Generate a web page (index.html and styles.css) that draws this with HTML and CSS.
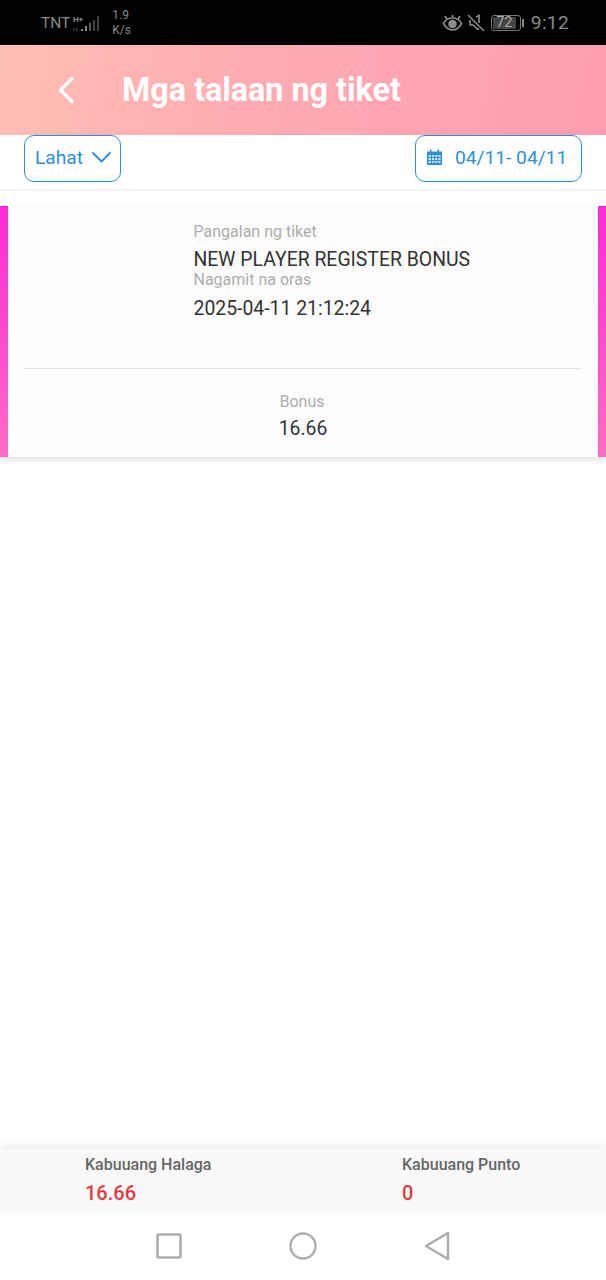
FILE: index.html
```html
<!DOCTYPE html>
<html lang="tl">
<head>
<meta charset="utf-8">
<title>Mga talaan ng tiket</title>
<link rel="stylesheet" href="styles.css">
</head>
<body>
<div class="screen">
  <div class="status">
    <div class="status-left">
      <span class="carrier">TNT</span>
      <svg class="signal" width="30" height="20" viewBox="0 0 30 20">
        <text x="1" y="9" class="hplus">H+</text>
        <g transform="translate(0 2)">
          <g fill="#3a3a3a"><rect x="1" y="13" width="1.500" height="3"/><rect x="4" y="13" width="1.500" height="3"/></g>
          <rect x="9" y="14" width="2" height="2" fill="#8a8a8a"/>
          <rect x="13" y="11" width="2" height="5" fill="#8a8a8a"/>
          <rect x="17" y="8" width="2" height="8" fill="#555"/>
          <rect x="21" y="5" width="2" height="11" fill="#3e3e3e"/>
          <rect x="25" y="1" width="2" height="15" fill="#3e3e3e"/>
        </g>
      </svg>
      <span class="speed">1.9<br>K/s</span>
    </div>
    <div class="status-right">
      <svg class="icon-eye" width="21" height="18" viewBox="0 0 21 18" fill="none" stroke="#8c8c8c" stroke-width="1.600">
        <path d="M1.500 9.500C4 5 7 4 10.500 4S17 5 19.500 9.500C17 14 14 16 10.500 16S4 14 1.500 9.500Z"/>
        <circle cx="10.500" cy="10" r="3.500" fill="#8c8c8c"/>
        <path d="M3 2l2 3M18 2l-2 3M10.500 1v2"/>
      </svg>
      <svg class="icon-mute" width="18" height="18" viewBox="0 0 18 18" fill="none" stroke="#8c8c8c" stroke-width="1.600">
        <path d="M1 1l16 16"/>
        <path d="M9 3.500L12 1v8M3 6v5h3l5 4.500 1-1" stroke-linejoin="round"/>
      </svg>
      <div class="battery"><span class="battery-level">72</span></div>
      <span class="battery-tip"></span>
      <span class="clock">9:12</span>
    </div>
  </div>

  <header class="topbar">
    <svg class="back" width="18" height="28" viewBox="0 0 18 28" fill="none" stroke="#fff" stroke-width="3.200" stroke-linecap="round" stroke-linejoin="round">
      <path d="M15 2.500L3.500 14 15 25.500"/>
    </svg>
    <h1 class="title">Mga talaan ng tiket</h1>
  </header>

  <div class="filters">
    <button class="pill pill-type">
      <span>Lahat</span>
      <svg width="19" height="11" viewBox="0 0 19 11" fill="none" stroke="#2f8fd6" stroke-width="1.800" stroke-linecap="round" stroke-linejoin="round"><path d="M1 1l8.500 8.500L18 1"/></svg>
    </button>
    <button class="pill pill-date">
      <svg width="15" height="16" viewBox="0 0 15 16">
        <path fill="#2f8fd6" d="M0 2.500h3V0.500h1.500v2h6V0.500H12v2h3V16H0Z"/>
        <g fill="#cfe5f6">
          <rect x="1.500" y="6" width="2.500" height="2"/><rect x="5" y="6" width="2.200" height="2"/><rect x="8.200" y="6" width="2.200" height="2"/><rect x="11.400" y="6" width="2.200" height="2"/>
          <rect x="1.500" y="9" width="2.500" height="2"/><rect x="5" y="9" width="2.200" height="2"/><rect x="8.200" y="9" width="2.200" height="2"/><rect x="11.400" y="9" width="2.200" height="2"/>
          <rect x="1.500" y="12" width="2.500" height="2"/><rect x="5" y="12" width="2.200" height="2"/><rect x="8.200" y="12" width="2.200" height="2"/><rect x="11.400" y="12" width="2.200" height="2"/>
        </g>
      </svg>
      <span>04/11- 04/11</span>
    </button>
  </div>

  <main class="list">
    <article class="ticket">
      <div class="ticket-top">
        <div class="ticket-info">
          <div class="label label-first">Pangalan ng tiket</div>
          <div class="value">NEW PLAYER REGISTER BONUS</div>
          <div class="label">Nagamit na oras</div>
          <div class="value value-date">2025-04-11 21:12:24</div>
        </div>
      </div>
      <div class="ticket-bottom">
        <div class="label">Bonus</div>
        <div class="value">16.66</div>
      </div>
    </article>
  </main>

  <div class="totals">
    <div class="total total-amount">
      <div class="total-label">Kabuuang Halaga</div>
      <div class="total-value">16.66</div>
    </div>
    <div class="total total-points">
      <div class="total-label">Kabuuang Punto</div>
      <div class="total-value">0</div>
    </div>
  </div>

  <nav class="navbar">
    <svg width="26" height="26" viewBox="0 0 26 26" fill="none" stroke="#aeaeae" stroke-width="2.600"><rect x="1.500" y="1.500" width="23" height="23" rx="1.500"/></svg>
    <svg width="28" height="28" viewBox="0 0 28 28" fill="none" stroke="#aeaeae" stroke-width="2.400"><circle cx="14" cy="14" r="12.500"/></svg>
    <svg width="26" height="30" viewBox="0 0 26 30" fill="none" stroke="#aeaeae" stroke-width="2.600" stroke-linejoin="round"><path d="M24 2v26L2 15Z"/></svg>
  </nav>
</div>
</body>
</html>
```
FILE: styles.css
```css
* { box-sizing: border-box; }
html, body { margin: 0; padding: 0; }
body { background: #fff; font-family: Roboto, "Liberation Sans", sans-serif; }

.screen {
  width: 606px;
  height: 1280px;
  display: flex;
  flex-direction: column;
  overflow: hidden;
}

/* Status bar */
.status {
  height: 45px;
  flex: none;
  background: #000;
  color: #8a8a8a;
  display: flex;
  align-items: center;
  justify-content: space-between;
  padding: 0 37px 0 41px;
}
.status-left, .status-right { display: flex; align-items: center; }
.carrier { font-size: 15.500px; }
.signal { margin-left: 2px; }
.hplus { font-size: 8px; font-weight: 700; fill: #8a8a8a; }
.speed { font-size: 12px; line-height: 15px; margin-left: 10px; padding-top: 1px; }
.icon-eye { margin-right: 4px; }
.icon-mute { margin-right: 6px; }
.battery {
  width: 30px;
  height: 16px;
  border: 1px solid #777;
  border-radius: 3px;
  padding: 1px;
  display: flex;
}
.battery-level {
  background: #444;
  border-radius: 1px;
  color: #aaa;
  font-size: 14.500px;
  line-height: 12px;
  text-align: center;
  flex: 1;
  margin-right: 3px;
}
.battery-tip { width: 2px; height: 8px; background: #888; margin-left: 1px; }
.clock { font-size: 19.200px; margin-left: 7px; letter-spacing: 0.3px; }

/* Header */
.topbar {
  height: 90px;
  flex: none;
  background: linear-gradient(100deg, #ffc0b4 0%, #ffb0b2 30%, #ffa5b2 65%, #ff9db0 100%);
  display: flex;
  align-items: center;
  padding-left: 57px;
}
.title {
  margin: 0 0 1px 47px;
  color: #fff;
  font-size: 32.300px;
  font-weight: 700;
  line-height: 40px;
}

/* Filters */
.filters {
  height: 56px;
  flex: none;
  padding: 0 24px;
  display: flex;
  justify-content: space-between;
  align-items: flex-start;
  border-bottom: 2px solid #f3f3f3;
}
.pill {
  height: 47px;
  background: #fff;
  border: 1px solid #2f8fd0;
  border-radius: 10px;
  color: #2f8fd6;
  font-family: inherit;
  font-size: 19.200px;
  display: flex;
  align-items: center;
  padding: 0 0 3px;
}
.pill-type { width: 97px; padding-left: 10px; gap: 9px; }
.pill-date { width: 167px; padding-left: 11px; gap: 13px; }

/* Ticket list */
.list { flex: 1; padding-top: 15px; min-height: 0; }
.ticket {
  height: 251px;
  background: #fcfcfc;
  border-left: 8px solid;
  border-right: 8px solid;
  border-image: linear-gradient(180deg, #f92ad6, #ff6cc4) 1;
  box-shadow: 0 3px 6px rgba(0, 0, 0, 0.12);
  display: flex;
  flex-direction: column;
  padding: 0 16px;
}
.ticket-top {
  height: 163px;
  flex: none;
  border-bottom: 1px solid #e6e6e6;
  padding: 17px 0 0 169.500px;
}
.ticket-bottom { text-align: center; padding-top: 24px; padding-right: 2px; }
.label { color: #adadad; font-size: 16px; line-height: 18px; }
.value { color: #333; font-size: 19.400px; line-height: 26px; }
.ticket-info .value { margin-top: 6px; }
.ticket-info .value + .label { margin-top: -2px; }
.ticket-info .value-date { margin-top: 7px; }
.ticket-bottom .value { margin-top: 5px; margin-right: -2px; }

/* Totals */
.totals {
  height: 63px;
  flex: none;
  background: #f9f9f9;
  box-shadow: 0 -4px 10px rgba(0, 0, 0, 0.07);
  display: flex;
  position: relative;
  padding-top: 7px;
}
.total-amount { margin-left: 85px; width: 317px; }
.total-label { color: #666; font-size: 16px; font-weight: 500; line-height: 18px; }
.total-value { color: #e03a3e; font-size: 20px; font-weight: 500; line-height: 24px; margin-top: 7px; }

/* Nav bar */
.navbar {
  height: 68px;
  flex: none;
  background: #fff;
  display: flex;
  align-items: center;
  justify-content: center;
  gap: 107px;
  padding-bottom: 1px;
}
```
